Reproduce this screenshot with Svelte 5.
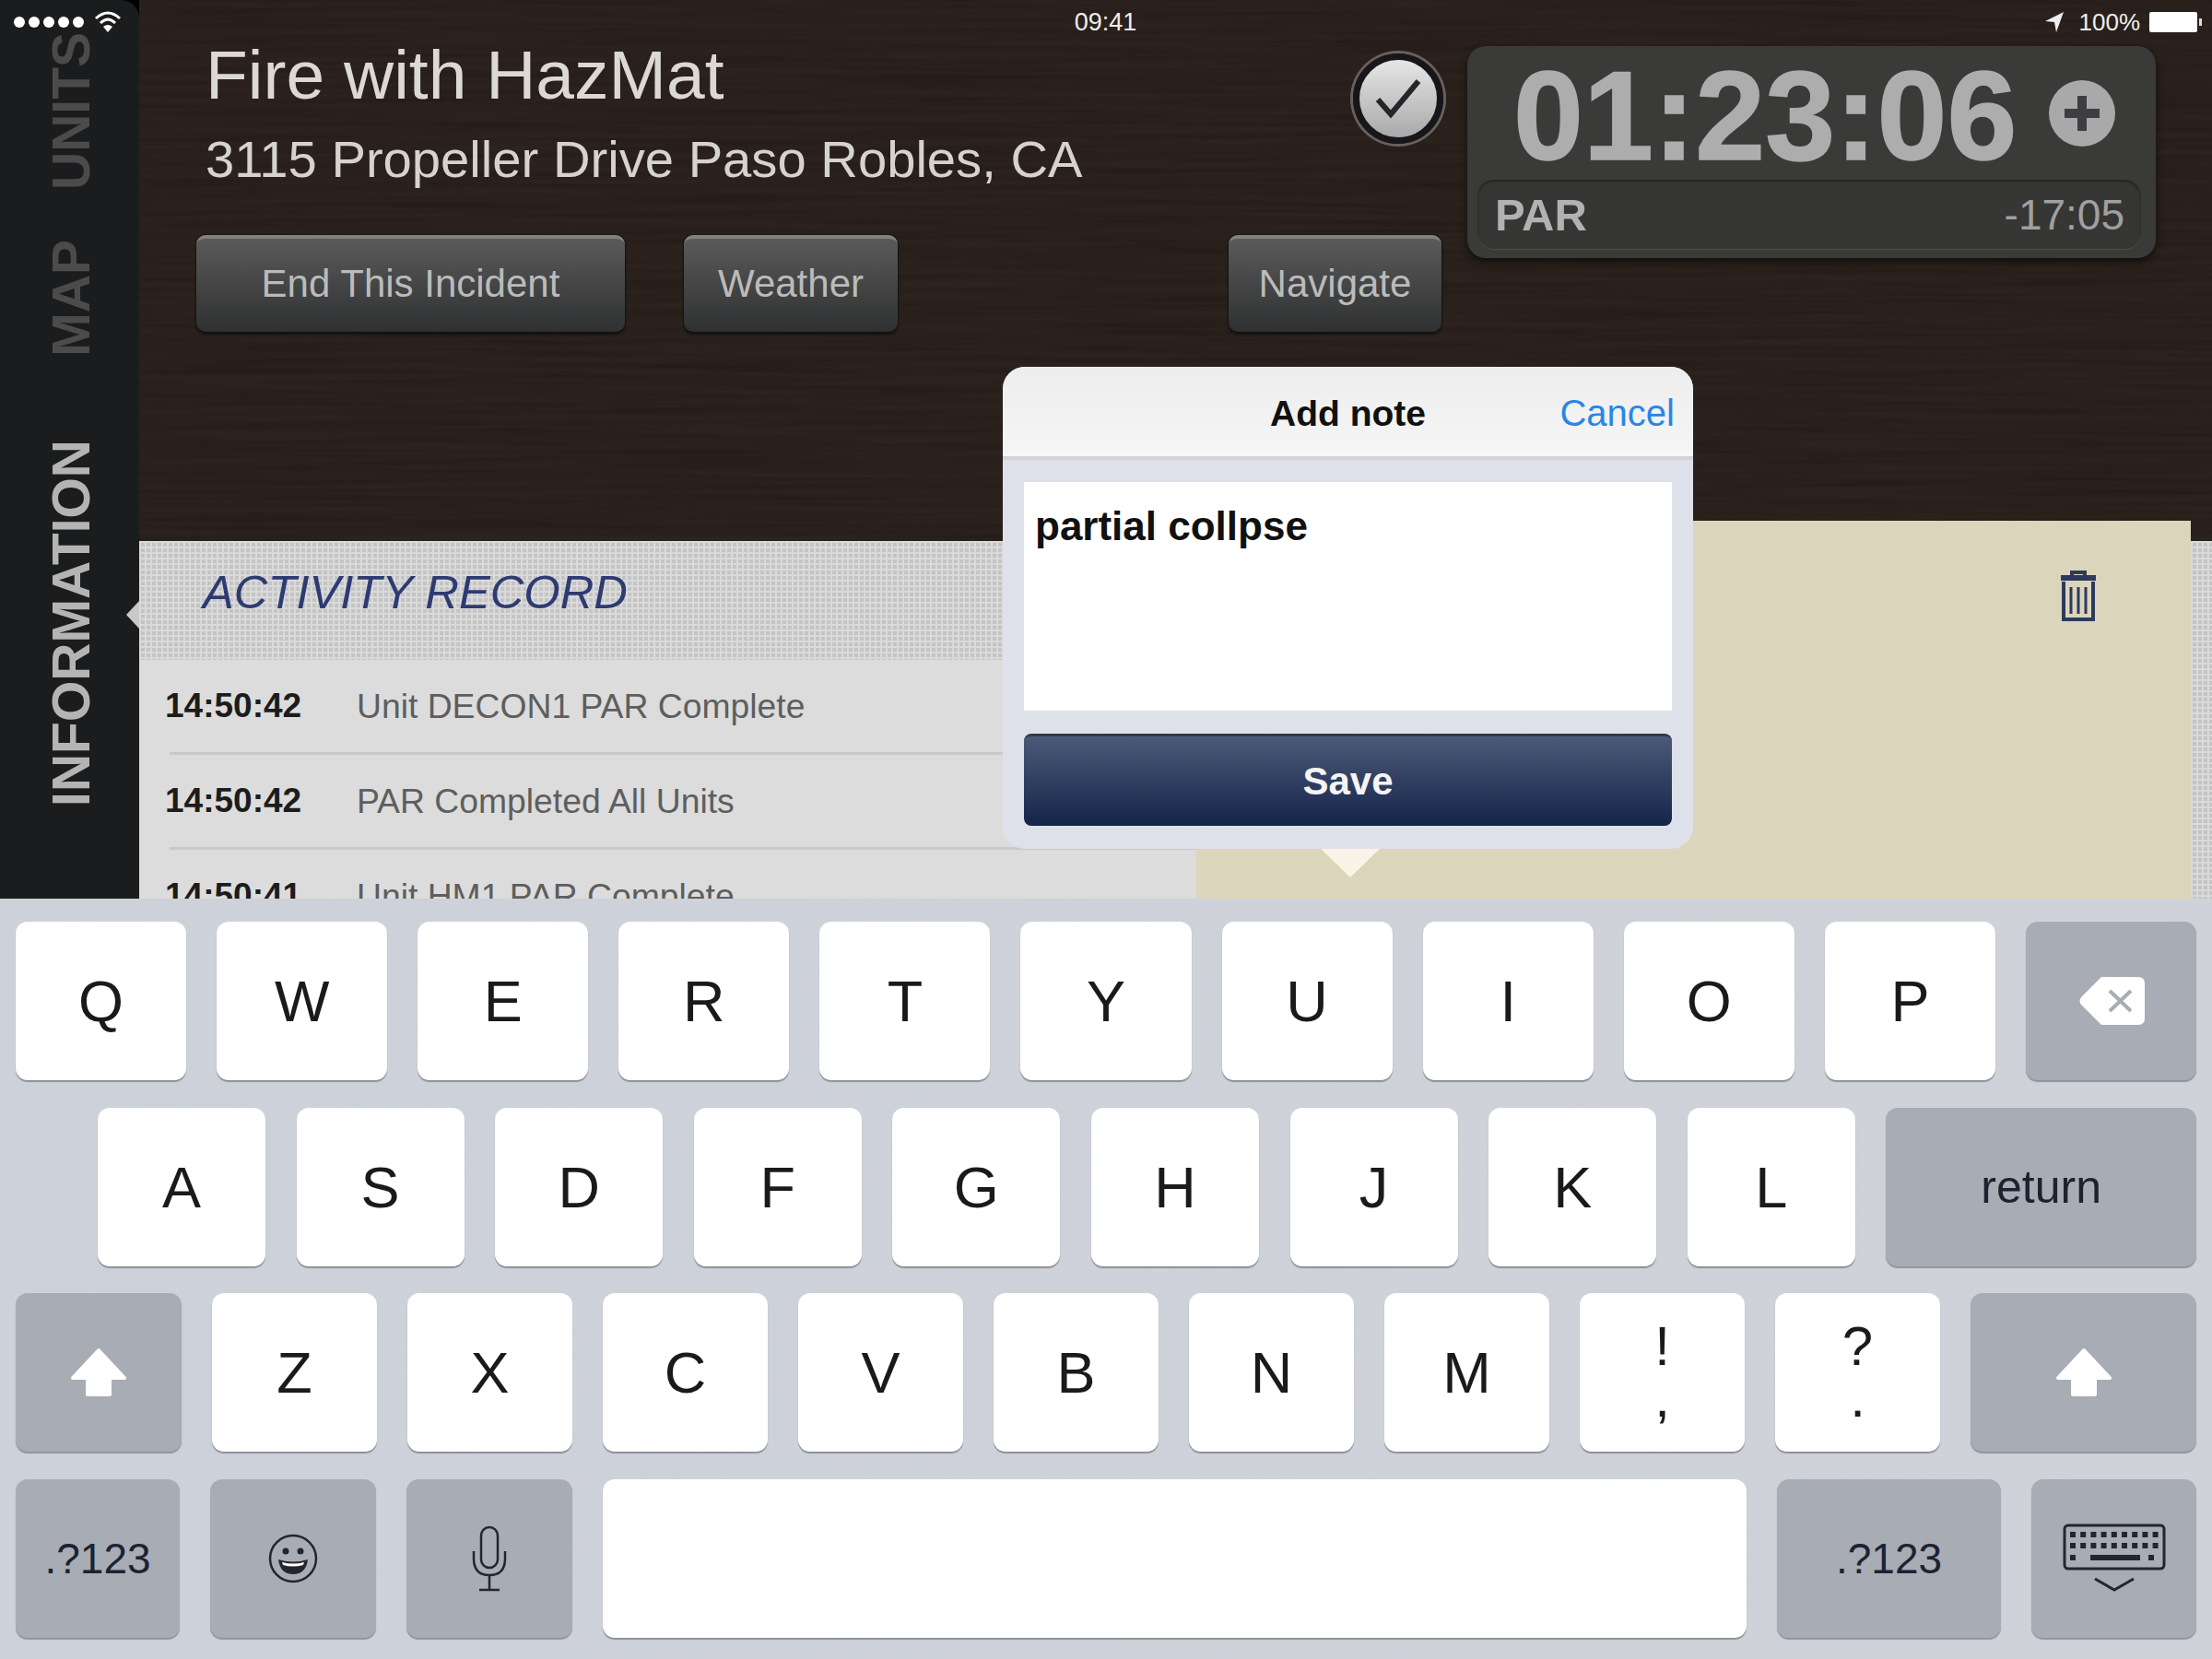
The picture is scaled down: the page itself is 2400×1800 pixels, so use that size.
<script>
  const rowOne = ['Q', 'W', 'E', 'R', 'T', 'Y', 'U', 'I', 'O', 'P'];
  const rowTwo = ['A', 'S', 'D', 'F', 'G', 'H', 'J', 'K', 'L'];
  const rowThree = ['Z', 'X', 'C', 'V', 'B', 'N', 'M'];

  const activity = [
    { time: '14:50:42', text: 'Unit DECON1 PAR Complete' },
    { time: '14:50:42', text: 'PAR Completed All Units' },
    { time: '14:50:41', text: 'Unit HM1 PAR Complete' }
  ];
</script>

{#snippet shift()}
  <svg width="62" height="54" viewBox="0 0 62 54">
    <path d="M31 3 L59 33 H43 V51 H19 V33 H3 Z" fill="#fff" stroke="#fff" stroke-width="4" stroke-linejoin="round" />
  </svg>
{/snippet}

<div class="app">
  <div class="status">
    <div class="status-left">
      <span class="signal">
        {#each [1, 2, 3, 4, 5] as dot (dot)}<i></i>{/each}
      </span>
      <svg width="30" height="28" viewBox="0 0 30 28" fill="none" stroke="#fff" stroke-width="3">
        <path d="M2 10 Q15 -2 28 10" />
        <path d="M7 15 Q15 7 23 15" />
        <path d="M15 25 L10 19 Q15 15 20 19 Z" fill="#fff" stroke="none" />
      </svg>
    </div>
    <div class="clock">09:41</div>
    <div class="status-right">
      <svg width="22" height="24" viewBox="0 0 22 24"><path d="M21 1 L1 11 L11 12 L13 23 Z" fill="#eee" /></svg>
      <span>100%</span>
      <span class="battery"></span>
    </div>
  </div>

  <div class="top">
    <nav class="sidebar">
      <span class="tab dim units">UNITS</span>
      <span class="tab dim map">MAP</span>
      <span class="tab info">INFORMATION</span>
      <span class="pointer"></span>
    </nav>

    <div class="content">
      <header class="incident">
        <svg class="wood" width="100%" height="100%" aria-hidden="true">
          <filter id="grain" color-interpolation-filters="sRGB">
            <feTurbulence type="fractalNoise" baseFrequency="0.004 0.16" numOctaves="3" seed="7" />
            <feColorMatrix values="0 0 0 0 0.1  0 0 0 0 0.07  0 0 0 0 0.06  0.7 0 0 0 -0.18" />
          </filter>
          <rect width="100%" height="100%" filter="url(#grain)" />
        </svg>

        <div class="incident-main">
          <div class="title-row">
            <div class="titles">
              <h1>Fire with HazMat</h1>
              <p>3115 Propeller Drive Paso Robles, CA</p>
            </div>
            <div class="check">
              <svg width="60" height="50" viewBox="0 0 60 50" fill="none">
                <path d="M8 26 L22 42 L52 6" stroke="#26262a" stroke-width="6" />
              </svg>
            </div>
          </div>
          <div class="actions">
            <button class="end">End This Incident</button>
            <button class="weather">Weather</button>
            <button class="navigate">Navigate</button>
          </div>
        </div>

        <div class="timer">
          <div class="timer-top">
            <span class="elapsed">01:23:06</span>
            <span class="plus">
              <svg width="44" height="44" viewBox="0 0 44 44"><path d="M17 3 H27 V17 H41 V27 H27 V41 H17 V27 H3 V17 H17 Z" fill="#3d3d42" /></svg>
            </span>
          </div>
          <div class="par">
            <b>PAR</b>
            <span>-17:05</span>
          </div>
        </div>
      </header>

      <div class="panels">
        <section class="record">
          <div class="record-head">ACTIVITY RECORD</div>
          {#each activity as item}
            <div class="entry">
              <b>{item.time}</b>
              <span>{item.text}</span>
            </div>
          {/each}
        </section>
        <section class="notes">
          <svg width="46" height="56" viewBox="0 0 46 56" fill="none" stroke="#2c3a5c" stroke-width="4">
            <path d="M16 6 V2 H30 V6" />
            <path d="M4 8 H42" stroke-width="6" />
            <path d="M7 12 V53 H39 V12" />
            <path d="M15 18 V47 M23 18 V47 M31 18 V47" stroke-width="3" />
          </svg>
        </section>
        <div class="edge"></div>
      </div>
    </div>
  </div>

  <div class="keyboard">
    <div class="row">
      {#each rowOne as k}
        <div class="key grow">{k}</div>
      {/each}
      <div class="key grow gray">
        <svg class="backspace" width="72" height="54" viewBox="0 0 72 54">
          <path d="M24 1 H64 Q71 1 71 8 V46 Q71 53 64 53 H24 L3 32 Q-2 27 3 22 Z" fill="#fff" />
          <path d="M33 16 L56 38 M56 16 L33 38" stroke="#a7acb5" stroke-width="4" />
        </svg>
      </div>
    </div>

    <div class="row second">
      {#each rowTwo as k}
        <div class="key w182">{k}</div>
      {/each}
      <div class="key grow gray word return">return</div>
    </div>

    <div class="row">
      <div class="key w180 gray">{@render shift()}</div>
      {#each rowThree as k}
        <div class="key w179">{k}</div>
      {/each}
      <div class="key w179 stacked"><span>!</span><span>,</span></div>
      <div class="key w179 stacked"><span>?</span><span>.</span></div>
      <div class="key grow gray">{@render shift()}</div>
    </div>

    <div class="row">
      <div class="key w178 gray word">.?123</div>
      <div class="key w180 gray">
        <svg width="54" height="54" viewBox="0 0 54 54" fill="none" stroke="#24262e" stroke-width="2.5">
          <circle cx="27" cy="27" r="25" />
          <circle cx="19" cy="19" r="3.5" fill="#24262e" stroke="none" />
          <circle cx="35" cy="19" r="3.5" fill="#24262e" stroke="none" />
          <path d="M11 28 Q27 33 43 28 Q41 44 27 44 Q13 44 11 28 Z" fill="#24262e" stroke="none" />
          <path d="M15 31 Q27 34 39 31 L38 34 Q27 37 16 34 Z" fill="#fff" stroke="none" />
        </svg>
      </div>
      <div class="key w180 gray">
        <svg width="38" height="72" viewBox="0 0 38 72" fill="none" stroke="#24262e" stroke-width="2.5">
          <rect x="10" y="2" width="18" height="44" rx="9" />
          <path d="M2 28 V36 Q2 54 19 54 Q36 54 36 36 V28" />
          <path d="M19 54 V69 M8 70 H30" />
        </svg>
      </div>
      <div class="key grow"></div>
      <div class="key w243 gray word">.?123</div>
      <div class="key w179 gray">
        <svg width="112" height="76" viewBox="0 0 112 76" fill="none" stroke="#24262e">
          <rect x="2" y="2" width="108" height="47" rx="4" stroke-width="3" />
          <path d="M8 12 H104 M8 24 H104" stroke-width="6" stroke-dasharray="6 5.2" />
          <path d="M8 37 H19 M93 37 H104" stroke-width="6" stroke-dasharray="6 5" />
          <path d="M30 37 H84" stroke-width="6" />
          <path d="M35 60 L56 72 L77 60" stroke-width="3" />
        </svg>
      </div>
    </div>
  </div>

  <div class="dialog">
    <div class="dialog-head">
      <strong>Add note</strong>
      <span class="cancel">Cancel</span>
    </div>
    <div class="dialog-body">
      <div class="note-text">partial collpse</div>
      <button class="save">Save</button>
    </div>
    <span class="arrow"></span>
  </div>
</div>

<style>
  :global(body) {
    background: #000;
  }

  .app {
    position: relative;
    width: 2400px;
    height: 1800px;
    display: flex;
    flex-direction: column;
    overflow: hidden;
    font-family: "Liberation Sans", Arial, sans-serif;
  }

  /* status bar */
  .status {
    position: absolute;
    z-index: 5;
    top: 0;
    left: 0;
    right: 0;
    height: 48px;
    padding: 0 12px 0 15px;
    display: grid;
    grid-template-columns: 1fr auto 1fr;
    align-items: center;
    color: #eee;
    font-size: 27px;
  }

  .status-left {
    display: flex;
    align-items: center;
    gap: 11px;
  }

  .signal {
    display: flex;
    gap: 4px;
  }

  .signal i {
    width: 12px;
    height: 12px;
    border-radius: 50%;
    background: #fff;
  }

  .clock {
    margin-left: -4px;
  }

  .status-right {
    display: flex;
    align-items: center;
    justify-content: flex-end;
    gap: 10px;
    font-size: 26px;
  }

  .status-right svg {
    margin-right: 6px;
  }

  .battery {
    position: relative;
    width: 52px;
    height: 22px;
    margin-right: 4px;
    background: #fff;
    border-radius: 2px;
  }

  .battery::after {
    content: '';
    position: absolute;
    right: -5px;
    top: 7px;
    width: 3px;
    height: 8px;
    background: #ddd;
  }

  .top {
    height: 975px;
    display: flex;
    overflow: hidden;
  }

  /* left tabs */
  .sidebar {
    position: relative;
    width: 151px;
    flex: none;
    display: flex;
    flex-direction: column;
    align-items: center;
    padding: 35px 0 0 4px;
    box-sizing: border-box;
    background: #1b1c1d;
    border-radius: 0 20px 0 0;
  }

  .tab {
    writing-mode: vertical-rl;
    transform: rotate(180deg);
    font-size: 57px;
    font-weight: 700;
    line-height: 1;
    color: #b4b4b4;
  }

  .tab.dim {
    color: #4b4b4c;
  }

  .map {
    margin-top: 54px;
  }

  .info {
    margin-top: 90px;
  }

  .pointer {
    position: absolute;
    top: 652px;
    right: 0;
    border: 15px solid transparent;
    border-left: 0;
    border-right: 14px solid #c9c9c9;
  }

  .content {
    flex: 1;
    display: flex;
    flex-direction: column;
  }

  /* incident header */
  .incident {
    position: relative;
    height: 587px;
    display: flex;
    box-sizing: border-box;
    padding-left: 62px;
    background: #2d231e;
    overflow: hidden;
  }

  .wood {
    position: absolute;
    inset: 0;
  }

  .incident-main {
    position: relative;
    width: 1351px;
    flex: none;
  }

  .title-row {
    display: flex;
    justify-content: space-between;
    padding: 44px 0 0 10px;
    margin-right: -2px;
  }

  h1 {
    margin: 0;
    font-size: 75px;
    font-weight: 400;
    line-height: 75px;
    color: #dcd8d4;
  }

  .titles p {
    margin: 24px 0 0;
    font-size: 56.2px;
    line-height: 60px;
    color: #d6d3cf;
  }

  .check {
    width: 84px;
    height: 84px;
    margin-top: 14px;
    display: flex;
    align-items: center;
    justify-content: center;
    border-radius: 50%;
    background: linear-gradient(#e6e6e6, #a9a9ab);
    border: 7px solid #17161a;
    box-shadow: 0 0 0 3px #6b5f5c;
  }

  .actions {
    display: flex;
    margin-top: 52px;
  }

  button {
    height: 105px;
    padding-bottom: 4px;
    font: 42px "Liberation Sans", Arial, sans-serif;
    color: #bbb;
    background: linear-gradient(#5a5a5a, #2f3031);
    border: 0;
    border-top: 4px solid #85807c;
    border-radius: 10px;
    box-shadow: 0 3px 3px #121010, 0 0 0 1px #1a1715;
  }

  .end {
    width: 465px;
  }

  .weather {
    width: 232px;
    margin-left: 64px;
  }

  .navigate {
    width: 231px;
    margin-left: auto;
  }

  .timer {
    position: relative;
    width: 747px;
    height: 230px;
    margin: 50px 0 0 28px;
    padding-top: 10px;
    box-sizing: border-box;
    background: #3a3a38;
    border-radius: 20px;
    box-shadow: 0 4px 8px #120e0c;
  }

  .timer-top {
    display: flex;
    align-items: center;
    padding: 2px 0 0 50px;
    height: 130px;
    box-sizing: border-box;
  }

  .elapsed {
    font-size: 136.5px;
    font-weight: 700;
    line-height: 130px;
    color: #adadae;
    -webkit-text-stroke: 1.5px #adadae;
  }

  .plus {
    width: 72px;
    height: 72px;
    margin: -6px 0 0 35px;
    display: flex;
    align-items: center;
    justify-content: center;
    border-radius: 50%;
    background: #a9a9aa;
  }

  .par {
    height: 75px;
    margin: 5px 16px 0 11px;
    padding: 0 18px 0 19px;
    display: flex;
    align-items: center;
    justify-content: space-between;
    border-radius: 18px;
    background: #363634;
    box-shadow: inset 0 2px 3px #232322, 0 1px 0 #4c4c4a;
    color: #a0a0a0;
    font-size: 46px;
  }

  .par b {
    font-size: 49px;
    color: #b2b2b2;
  }

  /* lower panels */
  .panels {
    position: relative;
    display: flex;
    height: 388px;
  }

  .record {
    width: 1147px;
    flex: none;
    background: #dcdcdc;
  }

  .record-head {
    height: 129px;
    box-sizing: border-box;
    padding: 0 0 18px 69px;
    display: flex;
    align-items: center;
    font-size: 50.7px;
    font-style: italic;
    color: #2e3a72;
    background-color: #c4c4c4;
    background-image:
      linear-gradient(#dadada 2px, transparent 2px),
      linear-gradient(90deg, #dadada 2px, transparent 2px);
    background-size: 6px 6px;
  }

  .entry {
    height: 103px;
    margin-left: 33px;
    box-sizing: border-box;
    display: flex;
    align-items: center;
    border-bottom: 3px solid #c9c9c9;
    font-size: 37px;
    color: #5e5e5e;
  }

  .entry b {
    width: 208px;
    margin-left: -5px;
    color: #1c1c1c;
  }

  .entry span {
    font-size: 37.3px;
  }

  .notes {
    position: relative;
    width: 1079px;
    height: 410px;
    margin-top: -22px;
    flex: none;
    box-sizing: border-box;
    padding: 54px 99px 0 0;
    display: flex;
    justify-content: flex-end;
    align-items: flex-start;
    background: #dbd5bb;
  }

  .edge {
    flex: 1;
    background-color: #c4c4c4;
    background-image:
      linear-gradient(#dadada 2px, transparent 2px),
      linear-gradient(90deg, #dadada 2px, transparent 2px);
    background-size: 6px 6px;
  }

  /* keyboard */
  .keyboard {
    flex: 1;
    display: flex;
    flex-direction: column;
    gap: 29.5px;
    padding: 25px 17px 0;
    background: linear-gradient(90deg, #cdd1da, #cfd2d8);
  }

  .row {
    display: flex;
    gap: 33px;
    height: 172px;
  }

  .second {
    gap: 33.6px;
    padding-left: 89px;
  }

  .key {
    display: flex;
    align-items: center;
    justify-content: center;
    box-sizing: border-box;
    background: #fff;
    border-radius: 13px;
    box-shadow: 0 2px 1px #8d9098;
    font-size: 63px;
    color: #1a1a1a;
  }

  .grow {
    flex: 1 1 0;
  }

  .w178 { width: 178px; }
  .w179 { width: 179px; }
  .w180 { width: 180px; }
  .w182 { width: 182px; }
  .w243 { width: 243px; }

  .gray {
    background: #a7acb5;
    box-shadow: 0 2px 1px #8f949d;
  }

  .backspace {
    margin-left: 4px;
  }

  .word {
    font-size: 46px;
    color: #1c2230;
  }

  .return {
    font-size: 50px;
  }

  .stacked {
    flex-direction: column;
    font-size: 60px;
    line-height: 56px;
  }

  /* note popover */
  .dialog {
    position: absolute;
    left: 1088px;
    top: 398px;
    width: 749px;
    height: 523px;
    background: #dfe1ea;
    border-radius: 24px;
  }

  .dialog-head {
    position: relative;
    height: 101px;
    box-sizing: border-box;
    padding-top: 4px;
    display: flex;
    align-items: center;
    justify-content: center;
    font-size: 40px;
    background: linear-gradient(#ededed, #f6f6f6);
    border-bottom: 4px solid #d3d3d6;
    border-radius: 24px 24px 0 0;
  }

  .dialog-head strong {
    font-size: 39px;
    color: #111;
  }

  .cancel {
    position: absolute;
    right: 20px;
    color: #2a85e6;
  }

  .dialog-body {
    padding: 24px 23px 0;
  }

  .note-text {
    height: 248px;
    box-sizing: border-box;
    padding: 21px 12px;
    background: #fff;
    font-size: 44px;
    font-weight: 700;
    line-height: 54px;
    color: #111;
  }

  .save {
    display: block;
    width: 100%;
    height: 100px;
    margin-top: 25px;
    padding: 0;
    font-size: 42px;
    font-weight: 700;
    color: #f4f4f4;
    background: linear-gradient(#4c5a78, #14244a);
    border-top: 3px solid #34394a;
    border-radius: 8px;
    box-shadow: none;
  }

  .arrow {
    position: absolute;
    left: 345px;
    bottom: -31px;
    border: 32px solid transparent;
    border-bottom: 0;
    border-top: 31px solid #f8f4e8;
  }
</style>
